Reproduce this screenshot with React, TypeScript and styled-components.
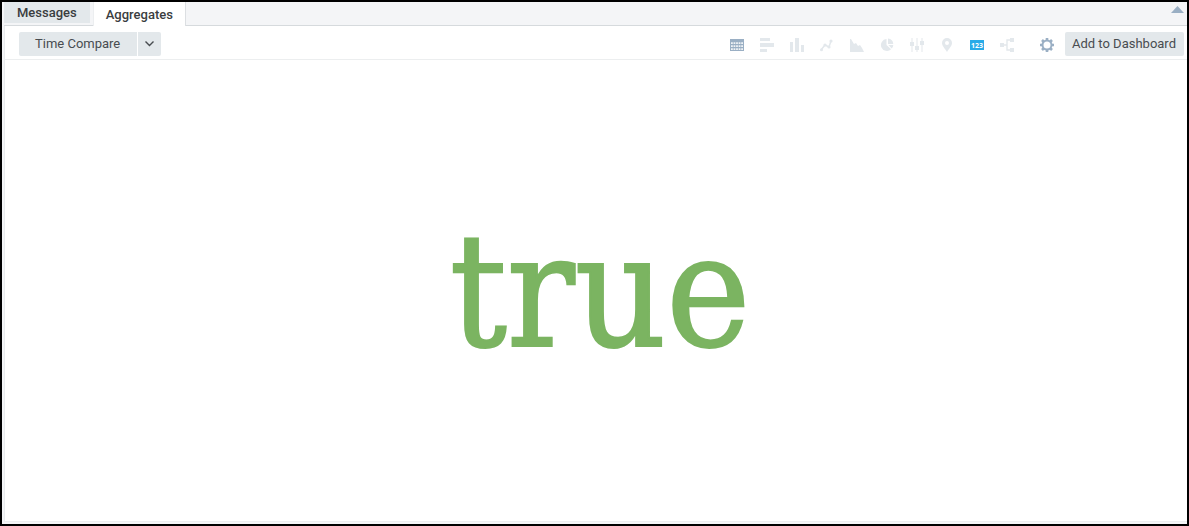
import React, { useState } from "react";
import styled, { createGlobalStyle, css } from "styled-components";

const GlobalStyle = createGlobalStyle`
  * { box-sizing: border-box; }
  body { margin: 0; background: #fff; font-family: Roboto, "Liberation Sans", sans-serif; }
  button { margin: 0; border: 0; font: inherit; cursor: pointer; }
`;

const Frame = styled.div`
  display: flex;
  flex-direction: column;
  min-height: 100vh;
  border: 2px solid #000;
  padding: 0 0 2px 2px;
  background: #f4f5f7;
`;

const TabBar = styled.div`
  display: flex;
  align-items: stretch;
  height: 24px;
  border-bottom: 1px solid #d6dadd;
  background: #f4f5f7;
`;

const Tab = styled.button<{ $active: boolean }>`
  font-size: 13px;
  line-height: 20px;
  font-weight: 500;
  color: #3a3d40;
  ${(p) =>
    p.$active
      ? css`
          margin: 0 0 -1px 3px;
          padding: 3px 12px 1px 12px;
          background: #fff;
          border-right: 1px solid #dcdfe2;
          border-left: 1px solid #eceef0;
        `
      : css`
          height: 21px;
          padding: 0 13px;
          background: #e3e8eb;
        `}
`;

const Collapse = styled.button`
  display: flex;
  align-self: flex-start;
  margin-left: auto;
  padding: 4px 3px 0 0;
  background: none;
`;

const Toolbar = styled.div`
  display: flex;
  align-items: center;
  height: 34px;
  padding: 2px 3px 0 14px;
  background: #fff;
  border-bottom: 1px solid #eceeef;
  border-left: 1px solid #e8ebed;
`;

const Button = styled.button`
  height: 24px;
  padding: 0 8px 0 7px;
  border-radius: 2px;
  background: #e3e8eb;
  color: #484c50;
  font-size: 13px;
  line-height: 24px;
`;

const SplitButton = styled.div`
  display: flex;
  gap: 1px;
`;

const SplitMain = styled(Button)`
  padding: 0 17px 0 16px;
  border-radius: 2px 0 0 2px;
`;

const SplitMenu = styled(Button)`
  display: grid;
  place-items: center;
  width: 23px;
  padding: 0;
  border-radius: 0 2px 2px 0;
`;

const ChartTypes = styled.div`
  display: flex;
  gap: 16px;
  margin-left: auto;
`;

const IconButton = styled.button<{ $color: string }>`
  display: flex;
  padding: 2px 0 0;
  background: none;
  color: ${(p) => p.$color};
`;

const Settings = styled(IconButton)`
  margin: 0 11px 0 26px;
`;

const Panel = styled.main`
  flex: 1;
  display: grid;
  place-items: center;
  padding-left: 8px;
  background: #fff;
  border-left: 1px solid #e8ebed;
  border-bottom: 1px solid #eceeef;
`;

const Value = styled.output`
  color: #7bb461;
  font-family: "DejaVu Serif Condensed", "DejaVu Serif", serif;
  font-size: 158px;
  line-height: 188px;
  -webkit-text-stroke: 2px #7bb461;
`;

const BadgeText = styled.text`
  fill: #fff;
  font-family: "Open Sans", sans-serif;
  font-size: 7px;
  font-weight: 700;
`;

const chartTypes: { name: string; color?: string; art: React.ReactNode }[] = [
  {
    name: "Table",
    color: "#9aafc4",
    art: (
      <>
        <path d="M0 1h14v12H0z" />
        <path
          d="M1 5h12M1 8h12M1 11h12"
          transform="translate(0 .2)"
          stroke="#fff"
          strokeOpacity=".85"
          strokeWidth="1.800"
          strokeDasharray="1.800 .750"
        />
      </>
    ),
  },
  { name: "Bar", art: <path d="M0 0h10v3H0zM0 5h14v4H0zM0 11h7v3H0z" /> },
  { name: "Column", art: <path d="M0 4h3v10H0zM5 0h4v14H5zM11 7h3v7h-3z" /> },
  {
    name: "Line",
    art: (
      <>
        <path d="M1 12l4-5 4 2 2-6" fill="none" stroke="currentColor" strokeWidth="1.5" />
        <circle cx="1.500" cy="11.800" r="1.500" />
        <circle cx="5" cy="7" r="1.600" />
        <circle cx="9" cy="9" r="1.600" />
        <circle cx="11" cy="3" r="1.600" />
      </>
    ),
  },
  { name: "Area", art: <path d="M0 1l1 0 3 5 2-1 2 3 2-1 2 3 2 4H0z" /> },
  {
    name: "Pie",
    art: (
      <>
        <path d="M6.5 1v6l4.600 4.300A6 6 0 1 1 6.5 1z" />
        <path d="M8 0.5A6 6 0 0 1 13.300 6H8z" />
        <path d="M8.5 7h4.800a6 6 0 0 1-1.600 3.500z" />
      </>
    ),
  },
  {
    name: "Box plot",
    art: <path d="M1.500 0h1v4H4v4H2.500v6h-1V8H0V4h1.500zM6.500 0h1v8H9v4H7.500v2h-1v-2H5V8h1.500zM11.500 0h1v3H14v4h-1.500v7h-1V7H10V3h1.500z" />,
  },
  {
    name: "Map",
    art: <path fillRule="evenodd" d="M7 0a5 5 0 0 1 5 5c0 3-3 5.500-5 9C5 10.500 2 8 2 5a5 5 0 0 1 5-5zm0 3a2 2 0 1 0 0 4 2 2 0 0 0 0-4z" />,
  },
  {
    name: "Single value",
    color: "#29abe8",
    art: (
      <>
        <path d="M0 2h14v10H0z" />
        <BadgeText x="7" y="9.500" textAnchor="middle">123</BadgeText>
      </>
    ),
  },
  {
    name: "Flow",
    art: (
      <>
        <path d="M0 5h4v4H0zM10 0h4v4h-4zM10 10h4v4h-4z" />
        <path d="M4 7h3M10 2H7v10h3" fill="none" stroke="currentColor" strokeWidth="1.400" />
      </>
    ),
  },
];

export default function App() {
  const [tab, setTab] = useState("Aggregates");
  return (
    <>
      <GlobalStyle />
      <Frame>
        <TabBar role="tablist">
          {["Messages", "Aggregates"].map((name) => (
            <Tab key={name} role="tab" aria-selected={tab === name} $active={tab === name} onClick={() => setTab(name)}>
              {name}
            </Tab>
          ))}
          <Collapse aria-label="Collapse panel">
            <svg width="13" height="7" viewBox="0 0 13 7"><path d="M0 7l6.500-7L13 7z" fill="#9aafc4" /></svg>
          </Collapse>
        </TabBar>
        <Toolbar>
          <SplitButton>
            <SplitMain>Time Compare</SplitMain>
            <SplitMenu aria-label="More time compare options">
              <svg width="9" height="6" viewBox="0 0 9 6" fill="none" stroke="#484c50" strokeWidth="1.4"><path d="M.5 .5l4 4 4-4" /></svg>
            </SplitMenu>
          </SplitButton>
          <ChartTypes>
            {chartTypes.map((c) => (
              <IconButton key={c.name} aria-label={c.name} $color={c.color ?? "#e3e8ec"}>
                <svg width="14" height="14" viewBox="0 0 14 14" fill="currentColor">{c.art}</svg>
              </IconButton>
            ))}
          </ChartTypes>
          <Settings aria-label="Settings" $color="#9aafc4">
            <svg width="14" height="14" viewBox="0 0 14 14">
              <circle cx="7" cy="7" r="4.500" fill="none" stroke="currentColor" strokeWidth="2" />
              <path d="M7 0v2M7 12v2M0 7h2M12 7h2M2 2l1.500 1.500M10.500 10.500L12 12M12 2l-1.500 1.500M3.500 10.500L2 12" stroke="currentColor" strokeWidth="2.600" />
            </svg>
          </Settings>
          <Button>Add to Dashboard</Button>
        </Toolbar>
        <Panel>
          <Value>true</Value>
        </Panel>
      </Frame>
    </>
  );
}
